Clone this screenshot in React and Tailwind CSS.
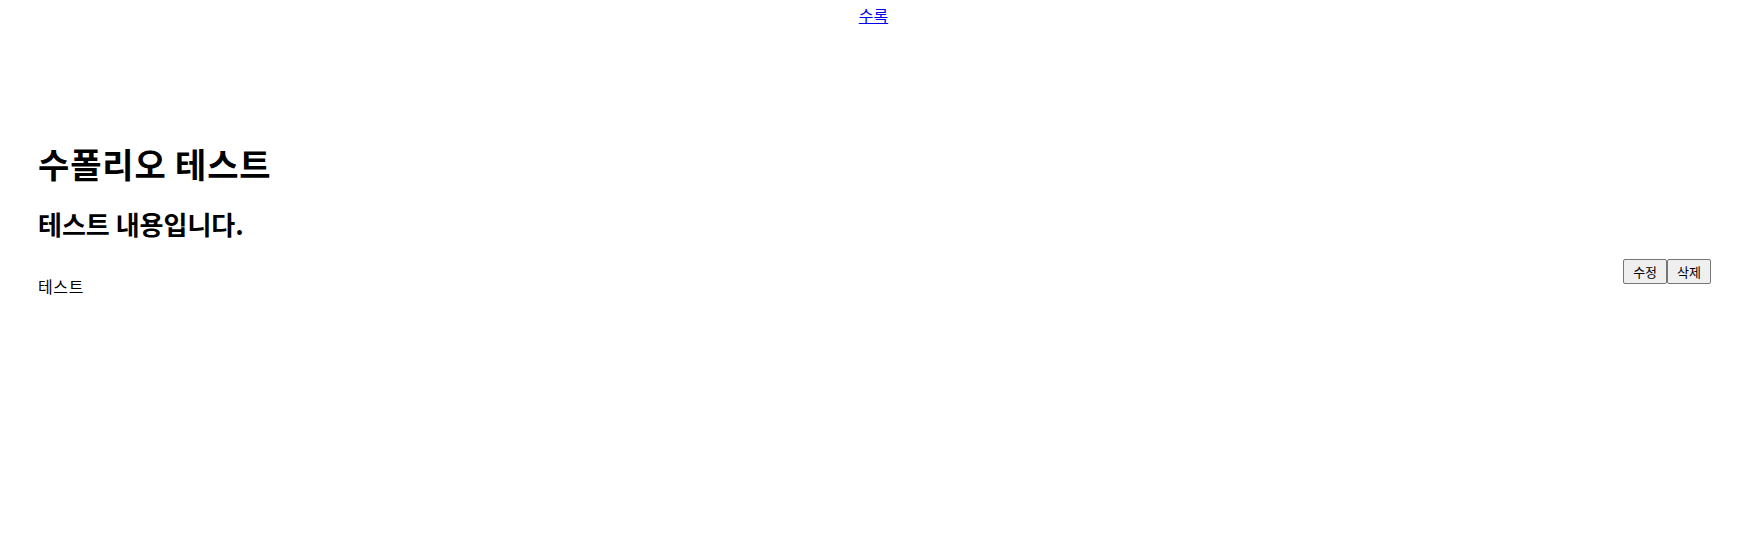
import React from "react";

const Post = ({ title, subtitle, body }) => {
  return (
    <div className="px-[38px] pt-[117px]">
      <h1 className="text-[34px] font-bold leading-[42px] tracking-[0.025em]">{title}</h1>
      <h2 className="mt-[23px] text-[26px] font-bold leading-[32px]">{subtitle}</h2>
      <div className="mt-[19px] flex items-start justify-between">
        <p className="mt-[16px] text-[16px] leading-[22px] tracking-[0.04em]">{body}</p>
        <div className="mr-[-12px] flex">
          <button className="h-[25px] rounded-[2px] border border-[#767676] bg-[#efefef] px-[9px] text-[13px] leading-none">
            수정
          </button>
          <button className="h-[25px] rounded-[2px] border border-[#767676] bg-[#efefef] px-[9px] text-[13px] leading-none">
            삭제
          </button>
        </div>
      </div>
    </div>
  );
};

export default function App() {
  return (
    <div
      className="min-h-[545px] bg-white text-black"
      style={{ fontFamily: '"Noto Sans CJK KR", "Noto Sans", sans-serif' }}
    >
      <div className="pl-[10px] pt-[4px] text-center text-[16px] leading-[22px]">
        <a href="#" className="text-[#0000ee] underline">
          수록
        </a>
      </div>
      <Post title="수폴리오 테스트" subtitle="테스트 내용입니다." body="테스트" />
    </div>
  );
}
